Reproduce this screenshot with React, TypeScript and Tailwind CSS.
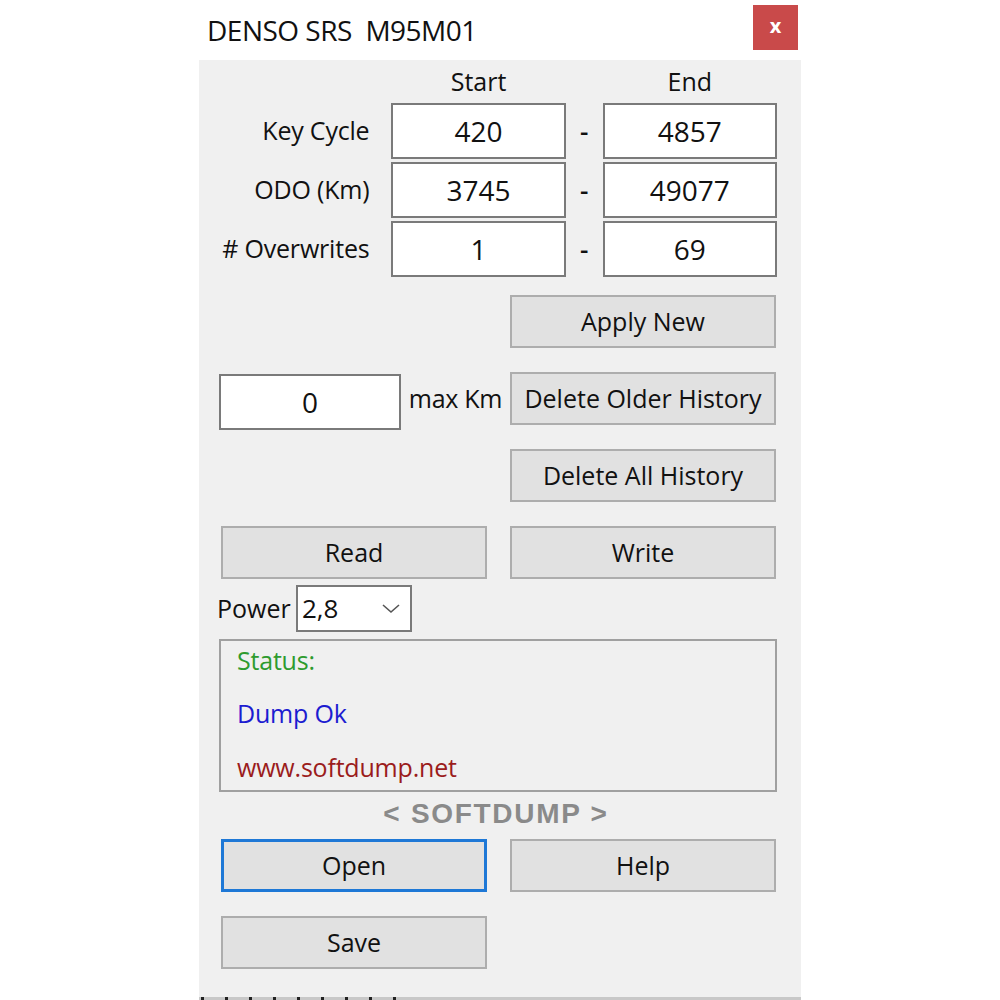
import React from "react";

const font = { fontFamily: '"Open Sans", "Noto Sans", sans-serif' };

type BtnProps = {
  label: string;
  focused?: boolean;
  className?: string;
};

const WinButton = ({ label, focused, className }: BtnProps) => {
  return (
    <div
      className={
        "flex items-center justify-center bg-[#e1e1e1] text-[#111] text-[25px] " +
        (focused
          ? "border-[3px] border-[#1e78d6] "
          : "border-2 border-[#adadad] ") +
        (className ?? "")
      }
    >
      {label}
    </div>
  );
};

const ValueBox = ({ value }: { value: string }) => {
  return (
    <div className="flex items-center justify-center w-[175px] h-[56px] bg-white border-2 border-[#7a7a7a] text-[28px] text-[#111]">
      {value}
    </div>
  );
};

const rows = [
  { label: "Key Cycle", start: "420", end: "4857" },
  { label: "ODO (Km)", start: "3745", end: "49077" },
  { label: "# Overwrites", start: "1", end: "69" },
];

export default function App() {
  return (
    <div className="w-[1000px] h-[1000px] bg-white overflow-hidden" style={font}>
      <div className="ml-[199px] w-[602px] flex flex-col">
        {/* title bar */}
        <div className="h-[60px] flex items-start bg-white">
          <div className="pl-[8px] pt-[9px] text-[28px] text-[#111] whitespace-pre tracking-[-0.5px]">
            DENSO SRS  M95M01
          </div>
          <div className="ml-auto mr-[3px] mt-[5px] w-[45px] h-[45px] bg-[#c94a4a] flex items-center justify-center text-white font-bold text-[20px] leading-none pb-[4px]">
            x
          </div>
        </div>

        {/* body */}
        <div className="bg-[#f0f0f0] h-[937px] flex flex-col pl-[20px] pr-[24px]">
          <div className="flex h-[43px] items-center">
            <div className="w-[173px]" />
            <div className="w-[175px] text-center text-[25px] text-[#111]">Start</div>
            <div className="w-[37px]" />
            <div className="w-[175px] text-center text-[25px] text-[#111]">End</div>
          </div>

          <div className="flex flex-col gap-[3px]">
            {rows.map((r) => (
              <div key={r.label} className="flex items-center h-[56px]">
                <div className="w-[151px] text-right text-[25px] text-[#111] tracking-[-0.2px]">
                  {r.label}
                </div>
                <div className="w-[22px]" />
                <ValueBox value={r.start} />
                <div className="w-[37px] text-center text-[26px] font-semibold text-[#111]">-</div>
                <ValueBox value={r.end} />
              </div>
            ))}
          </div>

          <div className="flex mt-[18px]">
            <div className="w-[291px]" />
            <WinButton label="Apply New" className="w-[266px] h-[53px]" />
          </div>

          <div className="flex mt-[24px] h-[53px] items-start">
            <div className="w-[182px] h-[56px] mt-[2px] bg-white border-2 border-[#7a7a7a] flex items-center justify-center text-[28px] text-[#111] shrink-0">
              0
            </div>
            <div className="w-[109px] h-[53px] flex items-center justify-center text-[25px] text-[#111] tracking-[-0.3px] shrink-0">
              max Km
            </div>
            <WinButton label="Delete Older History" className="w-[266px] h-[53px] shrink-0" />
          </div>

          <div className="flex mt-[24px]">
            <div className="w-[291px]" />
            <WinButton label="Delete All History" className="w-[266px] h-[53px]" />
          </div>

          <div className="flex mt-[24px] pl-[2px] gap-[23px]">
            <WinButton label="Read" className="w-[266px] h-[53px]" />
            <WinButton label="Write" className="w-[266px] h-[53px]" />
          </div>

          <div className="flex items-center mt-[6px] -ml-[2px]">
            <div className="text-[25px] text-[#111] w-[79px]">Power</div>
            <div className="w-[116px] h-[47px] bg-white border-2 border-[#7a7a7a] flex items-center pl-[4px] pr-[10px] text-[26px] text-[#111]">
              <span>2,8</span>
              <svg className="ml-auto" width="18" height="10" viewBox="0 0 18 10">
                <path d="M1 1 L9 8 L17 1" fill="none" stroke="#555" strokeWidth="1.6" />
              </svg>
            </div>
          </div>

          <div className="mt-[7px] w-[558px] h-[153px] border-2 border-[#a0a0a0] flex flex-col pl-[16px] text-[25px] tracking-[-0.2px]">
            <div className="h-[40px] shrink-0 flex items-center text-[#2e9b2e]">Status:</div>
            <div className="mt-[6px] h-[54px] shrink-0 flex items-center text-[#1c1cd0]">Dump Ok</div>
            <div className="h-[54px] shrink-0 flex items-center text-[#9b1c1c]">www.softdump.net</div>
          </div>

          <div
            className="h-[47px] pb-[4px] flex items-center justify-center text-[28px] font-bold text-[#8a8a8a] pr-[4px] whitespace-pre tracking-[1.7px]"
            style={{ fontFamily: '"Liberation Sans", Arial, sans-serif' }}
          >
            {"< SOFTDUMP >"}
          </div>

          <div className="flex pl-[2px] gap-[23px]">
            <WinButton label="Open" focused className="w-[266px] h-[53px]" />
            <WinButton label="Help" className="w-[266px] h-[53px]" />
          </div>

          <div className="flex mt-[24px] pl-[2px]">
            <WinButton label="Save" className="w-[266px] h-[53px]" />
          </div>
        </div>

        {/* bottom edge */}
        <div className="h-[3px] bg-[#c8c8c8] flex items-start gap-[21px] pl-[2px]">
          {[0, 1, 2, 3, 4, 5, 6, 7, 8].map((i) => (
            <div key={i} className="w-[3px] h-[3px] bg-[#222]" />
          ))}
        </div>
      </div>
    </div>
  );
}
